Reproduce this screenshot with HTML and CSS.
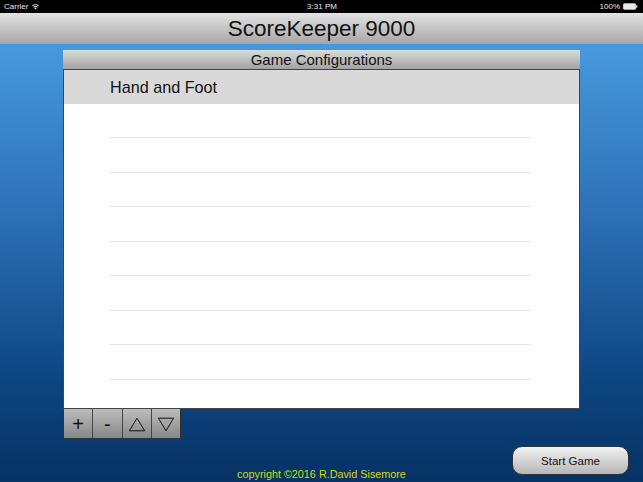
FILE: index.html
```html
<!DOCTYPE html>
<html lang="en">
<head>
  <meta charset="UTF-8">
  <meta name="viewport" content="width=device-width, initial-scale=1.0">
  <title>ScoreKeeper 9000</title>
  <link rel="stylesheet" href="styles.css">
</head>
<body>
  <div class="status-bar">
    <div class="status-left">
      Carrier
      <svg viewBox="0 0 12 9" class="wifi-icon" aria-hidden="true">
        <path d="M6 8.5L4.4 6.7a2.4 2.4 0 0 1 3.2 0z" fill="currentColor"/>
        <path d="M2.9 5.1a4.5 4.5 0 0 1 6.2 0l-0.8 0.9a3.3 3.3 0 0 0-4.6 0z" fill="currentColor"/>
        <path d="M1.3 3.4a6.8 6.8 0 0 1 9.4 0l-0.8 0.9a5.6 5.6 0 0 0-7.8 0z" fill="currentColor"/>
      </svg>
    </div>
    <div class="status-time">3:31 PM</div>
    <div class="status-right">
      100%
      <svg viewBox="0 0 16 7" class="battery-icon" aria-hidden="true">
        <rect x="0.5" y="0.5" width="13" height="6" rx="1" fill="currentColor" stroke="currentColor" stroke-width="0.8"/>
        <rect x="14" y="2.2" width="1.3" height="2.6" fill="currentColor"/>
      </svg>
    </div>
  </div>

  <header class="title-bar">
    <h1>ScoreKeeper 9000</h1>
  </header>

  <main class="content">
    <section class="panel">
      <div class="panel-header">Game Configurations</div>
      <ul class="config-list">
        <li class="config-row selected">Hand and Foot</li>
        <li class="config-row"></li>
        <li class="config-row"></li>
        <li class="config-row"></li>
        <li class="config-row"></li>
        <li class="config-row"></li>
        <li class="config-row"></li>
        <li class="config-row"></li>
        <li class="config-row"></li>
        <li class="config-row"></li>
      </ul>
    </section>

    <div class="list-tools">
      <button class="tool-button" aria-label="Add">+</button>
      <button class="tool-button" aria-label="Remove">-</button>
      <button class="tool-button" aria-label="Move up">
        <svg viewBox="0 0 20 18" class="arrow-icon" aria-hidden="true">
          <polygon points="10,2 18.5,16 1.5,16" fill="none" stroke="currentColor" stroke-width="1.1"/>
        </svg>
      </button>
      <button class="tool-button" aria-label="Move down">
        <svg viewBox="0 0 20 18" class="arrow-icon" aria-hidden="true">
          <polygon points="1.5,2 18.5,2 10,16" fill="none" stroke="currentColor" stroke-width="1.1"/>
        </svg>
      </button>
    </div>
  </main>

  <footer class="footer">
    <span></span>
    <p class="copyright">copyright &copy;2016 R.David Sisemore</p>
    <button class="start-button">Start Game</button>
  </footer>
</body>
</html>
```

FILE: styles.css
```css
/* Base */
* {
  margin: 0;
  padding: 0;
  box-sizing: border-box;
}

html,
body {
  width: 643px;
  height: 482px;
  overflow: hidden;
}

body {
  font-family: "Liberation Sans", Arial, sans-serif;
  color: #111111;
  background: linear-gradient(to bottom, #4fa3e6 0px, #2f74bb 200px, #0d4581 380px, #073263 482px);
  display: flex;
  flex-direction: column;
}

/* Status bar */
.status-bar {
  height: 13px;
  background-color: #000000;
  color: #e8e8e8;
  font-size: 8px;
  display: grid;
  grid-template-columns: 1fr auto 1fr;
  align-items: center;
  padding: 0 5px 0 4px;
}

.status-left {
  display: flex;
  align-items: center;
  gap: 3px;
}

.status-time {
  padding-left: 2px;
}

.status-right {
  display: flex;
  align-items: center;
  justify-content: flex-end;
  gap: 3px;
}

.wifi-icon {
  width: 9px;
  height: 7px;
}

.battery-icon {
  width: 15px;
  height: 7px;
}

/* Title bar */
.title-bar {
  height: 31px;
  background: linear-gradient(to bottom, #e2e2e2, #a6a6a6);
  display: flex;
  align-items: center;
  justify-content: center;
}

.title-bar h1 {
  font-size: 22.5px;
  font-weight: normal;
  color: #111111;
  padding-top: 1px;
}

/* Main */
.content {
  padding: 6px 63px 0;
}

.panel {
  width: 517px;
}

.panel-header {
  height: 20px;
  background: linear-gradient(to bottom, #dcdcdc, #a2a2a2);
  border-bottom: 1px solid #444444;
  text-align: center;
  font-size: 15px;
  line-height: 19px;
  color: #111111;
}

.config-list {
  list-style: none;
  height: 339px;
  background-color: #ffffff;
  border-left: 1px solid #444444;
  border-right: 1px solid #444444;
  border-bottom: 1px solid #444444;
  overflow: hidden;
}

.config-row {
  height: 34.5px;
  margin-left: 46px;
  margin-right: 48px;
  border-bottom: 1px solid #e6e6e6;
  font-size: 16.2px;
  line-height: 34px;
}

.config-row.selected {
  margin: 0;
  padding-left: 46px;
  background-color: #d9d9d9;
  border-bottom: none;
  height: 33.5px;
}

/* List tools */
.list-tools {
  display: flex;
  width: 118px;
  height: 30px;
  border: 1px solid #333333;
  border-top: none;
}

.tool-button {
  flex: 1;
  background: linear-gradient(to bottom, #bdbdbd, #878787);
  border: none;
  border-right: 1px solid #444444;
  font-family: "Liberation Sans", Arial, sans-serif;
  font-size: 20px;
  color: #111111;
  display: flex;
  align-items: center;
  justify-content: center;
  padding-top: 1px;
}

.tool-button:last-child {
  border-right: none;
}

.arrow-icon {
  width: 18px;
  height: 17px;
}

/* Footer */
.footer {
  flex: 1;
  display: grid;
  grid-template-columns: 1fr auto 1fr;
  align-items: end;
}

.copyright {
  color: #d4d816;
  font-size: 10.8px;
  padding-bottom: 2px;
}

.start-button {
  justify-self: end;
  align-self: start;
  margin-top: 7px;
  margin-right: 14px;
  width: 117px;
  height: 29px;
  border: 1px solid #333333;
  border-radius: 10px;
  background: linear-gradient(to bottom, #f2f2f2, #b6b6b6);
  font-family: "Liberation Sans", Arial, sans-serif;
  font-size: 11.5px;
  color: #111111;
}
```
